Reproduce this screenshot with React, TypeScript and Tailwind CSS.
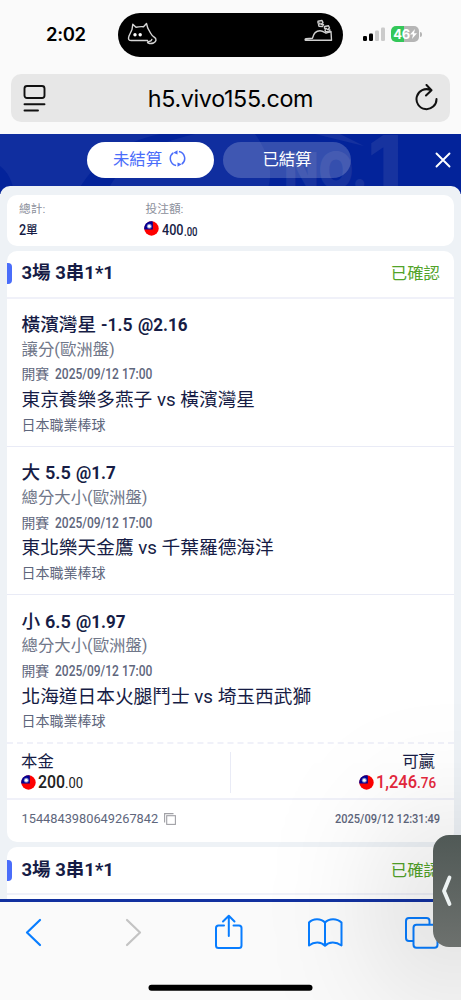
type Leg = {
  pick: string;
  line: string;
  odds: string;
  market: string;
  teams: string;
};

const legs: Leg[] = [
  { pick: "橫濱灣星", line: "-1.5", odds: "@2.16", market: "讓分(歐洲盤)", teams: "東京養樂多燕子 vs 橫濱灣星" },
  { pick: "大", line: "5.5", odds: "@1.7", market: "總分大小(歐洲盤)", teams: "東北樂天金鷹 vs 千葉羅德海洋" },
  { pick: "小", line: "6.5", odds: "@1.97", market: "總分大小(歐洲盤)", teams: "北海道日本火腿鬥士 vs 埼玉西武獅" },
];

function Flag() {
  return (
    <svg className="size-[15px] shrink-0" viewBox="0 0 15 15">
      <circle cx="7.5" cy="7.5" r="7.2" fill="#fe0000" />
      <path d="M.3 8.5A7.2 7.2 0 0 1 8.8.4V8.500Z" fill="#000095" />
      <circle cx="5.3" cy="5.3" r="2.500" fill="#7a82cb" />
      <circle cx="5.3" cy="5.3" r="1.500" fill="#fff" />
    </svg>
  );
}

function StatusBar() {
  return (
    <div className="flex h-[74px] items-start">
      <div className="w-[118px] pt-[20px] pl-[46px] font-['Inter',sans-serif] text-[18.5px] leading-7 font-semibold tracking-[-0.400px] text-black">
        2:02
      </div>
      <div className="mt-[13px] flex h-[43.5px] w-[225px] items-start justify-between rounded-full bg-black pr-[10px] pl-[9px]">
        <svg className="mt-[9px] h-[23px] w-[31px]" viewBox="0 0 31 23" fill="none" stroke="#d6d6d6" strokeWidth="1.400" strokeLinejoin="round" strokeLinecap="round">
          <path d="M20.500 18.500H4C1.300 18.500 1.100 16.500 2 14L5 7.500L5.800 2.300L9 5.300C12 4.600 14.500 4.500 16.500 4.800L19.500 1.500L20.800 6.200L23.500 11C24.500 12.800 25.500 14 27 15C30 16.500 29.500 20 26.500 21C24 22 20.500 21.500 20.500 20.300C21 19 24.500 20 24.800 17.500" />
          <circle cx="8" cy="12.800" r="1.700" fill="#fff" stroke="none" />
          <circle cx="13.200" cy="12.800" r="1.700" fill="#fff" stroke="none" />
        </svg>
        <svg className="mt-[6px] h-[23px] w-[29px]" viewBox="0 0 29 23" fill="none" stroke="#cfcfcf" strokeWidth="1.400" strokeLinejoin="round" strokeLinecap="round">
          <path d="M2 19.800L8.500 19.200C9.500 14.500 12.500 11.800 16 11.800C18.500 11.800 20 13 22 14.200L27 12.500L27.500 21.300H2C.8 21.300.8 20.100 2 19.800Z" />
          <path d="M14 2.200L18 1.500L19 3.500L17 5.200L19.500 5.500L18.500 7.500L15 7.200L14.500 5.800L16 4.200L14 4Z" />
          <path d="M20.500 7.500L24.500 6.800L25.500 9L23.500 10.500L26 11L25 13L21.500 12.500L21 11L22.500 9.500L20.500 9.300Z" />
        </svg>
      </div>
      <div className="mt-[26px] ml-5 flex items-end gap-[3px]">
        <svg className="h-[16px] w-[22px]" viewBox="0 0 22 16">
          <rect x="0" y="10" width="4" height="5" rx="1.2" fill="#000" />
          <rect x="6" y="7.500" width="4" height="7.500" rx="1.2" fill="#000" />
          <rect x="12" y="4.500" width="4" height="10.500" rx="1.2" fill="#cbcbcb" />
          <rect x="18" y="1.500" width="4" height="13.500" rx="1.2" fill="#cbcbcb" />
        </svg>
        <div className="ml-[3px] flex items-center">
          <div className="flex h-4 w-[28px] items-center justify-center rounded-[5px] bg-linear-to-r from-[#34c759] from-46% to-[#b5b5b5] to-46% font-['Inter',sans-serif] text-[13px] leading-4 font-bold text-white">
            <span className="tracking-[-0.4px]">46</span>
            <svg className="h-[10px] w-[7px]" viewBox="0 0 7 10" fill="#fff"><path d="M5 0L0 5.600H3L2 10L7 4.300H4Z" /></svg>
          </div>
          <div className="ml-px h-[5px] w-[1.500px] rounded-r-full bg-[#b5b5b5]" />
        </div>
      </div>
    </div>
  );
}

function AddressBar() {
  return (
    <div className="mx-[11px] flex h-12 items-center justify-between rounded-[10px] bg-[#e7e7e7] pr-[12px] pl-3">
      <svg className="h-7 w-6" viewBox="0 0 24 28" fill="none" stroke="#111" strokeWidth="1.900" strokeLinecap="round">
        <rect x="1.500" y="2" width="20" height="12" rx="2.500" />
        <path d="M1.500 20.300H21.500M1.500 26.500H15" />
      </svg>
      <div className="pt-[2px] font-['Inter',sans-serif] text-[23.300px] tracking-[-0.350px] text-black">h5.vivo155.com</div>
      <svg className="h-7 w-6" viewBox="0 0 24 28" fill="none" stroke="#111" strokeWidth="2" strokeLinecap="round" strokeLinejoin="round">
        <path d="M16.500 6A10 10 0 1 0 22.500 15M12.500 1L17.500 6.200L12 11.500" />
      </svg>
    </div>
  );
}

function Tabs() {
  return (
    <div className="relative flex h-[60px] items-start overflow-hidden bg-[#102e9f] pt-2 pl-[87px]">
      <svg className="absolute inset-0 h-[60px] w-[461px]" viewBox="0 0 461 60">
        <path d="M255 0H461V60H265C275 45 270 20 255 0Z" fill="#03239a" />
        <path d="M76 60C92 30 120 8 160 0H195C150 10 120 28 106 60Z" fill="#03239a" />
        <path d="M0 32C8 38 13 48 14 60H0Z" fill="#03239a" />
        <path d="M315 0L364 12L340 0Z" fill="#15319f" />
        <text x="284" y="54" fill="#17339f" fontSize="50" fontWeight="900" fontFamily="Inter, sans-serif" textLength="84" lengthAdjust="spacingAndGlyphs">NO.</text>
        <text x="368" y="55" fill="#17339f" fontSize="74" fontWeight="900" fontFamily="Inter, sans-serif">1</text>
      </svg>
      <div className="relative flex h-[35.500px] w-[127px] items-center justify-center gap-[7px] rounded-full bg-white pt-px pr-[2px] text-[16.400px] text-[#4a6dfa]">
        <span>未結算</span>
        <svg className="-mt-[3px] h-[17px] w-[17px]" viewBox="0 0 18 18" fill="none" stroke="#4a6dfa" strokeWidth="1.600">
          <path d="M7.500 16.300A7.400 7.400 0 0 1 4.500 3M10.500 1.700A7.400 7.400 0 0 1 13.500 15" />
          <path d="M4.500 2.800L9 .3V4.800ZM13.500 15.200L9 17.700V13.200Z" fill="#4a6dfa" stroke="none" />
        </svg>
      </div>
      <div className="relative ml-[9px] flex h-[35.500px] w-[128px] items-center justify-center rounded-full bg-white/20 pt-px text-[16.400px] text-white">
        已結算
      </div>
      <svg className="relative mt-[10px] ml-[84px] size-4" viewBox="0 0 16 16" stroke="#fff" strokeWidth="1.900" strokeLinecap="round">
        <path d="M1.500 1.500L14.500 14.500M14.500 1.500L1.500 14.500" />
      </svg>
    </div>
  );
}

function SlipHeader() {
  return (
    <div className="flex h-[48px] items-center justify-between border-b-2 border-[#f0f1f9] pr-[14px]">
      <div className="flex items-center">
        <span className="h-[21px] w-[5px] rounded-r-[4px] bg-[#4a6dfa]" />
        <span className="ml-[9.500px] pt-px text-[18.500px] font-bold text-[#161c45]">3場 3串1*1</span>
      </div>
      <span className="pt-[2px] text-[16.400px] text-[#52a329]">已確認</span>
    </div>
  );
}

function LegRow({ leg, last }: { leg: Leg; last: boolean }) {
  return (
    <div className={`pt-[14px] pl-[14.500px] whitespace-nowrap ${last ? "h-[149px] border-b-2 border-dashed border-[#f0f1f9]" : "h-[148.400px] border-b border-[#e9ebf6]"}`}>
      <div className="flex h-[25px] items-center gap-[5px] text-[18.700px] font-medium text-[#161c45]">
        <span>{leg.pick}</span>
        <span className={`inline-block origin-left font-semibold ${leg.line.startsWith("-") ? "-mr-[2px] scale-x-[0.94]" : "-mr-px scale-x-[0.97]"}`}>{leg.line}</span>
        <span className="inline-block origin-left scale-x-[0.91] font-bold">{leg.odds}</span>
      </div>
      <div className="flex h-[25px] items-center text-[16.400px] text-[#707789]">{leg.market}</div>
      <div className="flex h-[24px] items-center gap-[6px] text-[13.800px] text-[#5e667c]">
        <span>開賽</span>
        <span className="inline-block w-[97px] origin-left scale-x-[0.870] font-medium">2025/09/12 17:00</span>
      </div>
      <div className="flex h-[27px] items-center text-[18.700px] text-[#161c45]">{leg.teams}</div>
      <div className="flex h-[23px] items-center text-[14px] text-[#5e667c]">日本職業棒球</div>
    </div>
  );
}

function Slip() {
  return (
    <section className="h-[591.500px] overflow-hidden rounded-[10px] bg-white">
      <SlipHeader />
      {legs.map((leg, i) => (
        <LegRow key={leg.teams} leg={leg} last={i === legs.length - 1} />
      ))}
      <div className="flex h-[55.500px] border-b-2 border-[#f0f1f9] whitespace-nowrap">
        <div className="mt-2 h-[41px] w-[224px] border-r border-[#e9ebf6] pl-[14px]">
          <div className="flex h-5 items-center text-[16.400px] text-[#161c45]">本金</div>
          <div className="flex h-[20px] items-center text-[#222]">
            <Flag />
            <span className="ml-[1.500px] inline-block w-[27.500px] origin-left scale-x-[0.85] text-[18.700px] font-medium">200</span>
            <span className="mt-[3px] inline-block origin-left scale-x-[0.84] text-[15.500px]">.00</span>
          </div>
        </div>
        <div className="mt-2 flex flex-1 flex-col items-end pr-[19px]">
          <div className="flex h-5 items-center text-[16.400px] text-[#161c45]">可贏</div>
          <div className="flex h-[20px] items-center text-[#e5283d]">
            <Flag />
            <span className="ml-[2px] inline-block w-[41px] origin-left scale-x-[0.88] text-[18.700px] font-medium">1,246</span>
            <span className="-mr-px mt-[3px] inline-block w-[19px] origin-left scale-x-[0.87] text-[15.500px] font-medium">.76</span>
          </div>
        </div>
      </div>
      <div className="flex h-[38px] items-center pr-[14px] pl-[14.500px] whitespace-nowrap text-[#5e667c]">
        <span className="text-[12.800px]">1544843980649267842</span>
        <svg className="ml-[6px] size-3" viewBox="0 0 12 12" fill="none" stroke="#a0a0a5" strokeWidth="1.100">
          <rect x="2.700" y="2.700" width="8.700" height="8.700" />
          <path d="M.6 9.500V.6H9.500" />
        </svg>
        <span className="ml-auto inline-block w-[105px] origin-left scale-x-[0.850] text-[13px] font-medium">2025/09/12 12:31:49</span>
      </div>
    </section>
  );
}

function Toolbar() {
  return (
    <div className="h-[101px] border-t-[3px] border-[#1231a0] bg-[#fafafa]">
      <svg className="block h-[98px] w-[461px]" viewBox="0 902 461 98" fill="none" stroke="#087dff" strokeWidth="2" strokeLinecap="round" strokeLinejoin="round">
        <path d="M40 920L27 932.500L40 945" strokeWidth="2.200" />
        <path d="M127 920L140 932.500L127 945" stroke="#c3c3c3" strokeWidth="2.200" />
        <path d="M224 925.500H218.500Q216 925.500 216 928V945.500Q216 948 218.500 948H239Q241.500 948 241.500 945.500V928Q241.500 925.500 239 925.500H233.500M228.800 936V916M223 921.500L228.800 915.700L234.500 921.500" />
        <path d="M325 922.500C321 918 313 918 309 922.500V945.500C314 941.500 321 941.500 325 945.800C329 941.500 336 941.500 341.500 945.500V922.500C337 918 329 918 325 922.500ZM325 922.500V945.500" />
        <rect x="413.500" y="924.800" width="24" height="23" rx="3" />
        <path d="M413 941H409Q406 941 406 938V921Q406 918 409 918H426.500Q429.500 918 429.500 921V924" />
        <path d="M151.500 987.700H309.500" stroke="#000" strokeWidth="6" />
      </svg>
    </div>
  );
}

export default function App() {
  return (
    <main className="relative h-[1000px] w-[461px] overflow-hidden bg-[#fafafa] font-['Roboto','Noto_Sans_CJK_TC',sans-serif]">
      <StatusBar />
      <AddressBar />
      <div className="mt-3 flex h-[765px] flex-col overflow-hidden">
        <Tabs />
        <div className="relative -mt-[8.500px] flex-1 overflow-hidden rounded-t-[10px] bg-[#eef2f6] px-[7px] pt-[9px]">
          <div className="flex h-[51px] rounded-[10px] bg-white pl-[12px] whitespace-nowrap">
            <div className="w-[126.500px] pt-[5px]">
              <div className="flex h-[20px] items-center text-[11.700px] text-[#8b8f9b]">總計:</div>
              <div className="flex h-[22px] items-center text-[#161c45]">
                <span className="inline-block w-[7px] origin-left scale-x-[0.9] text-[14px] font-medium">2</span>
                <span className="text-[11.700px] font-medium">單</span>
              </div>
            </div>
            <div className="pt-[5px]">
              <div className="flex h-[20px] items-center text-[11.700px] text-[#8b8f9b]">投注額:</div>
              <div className="-ml-[2px] flex h-[22px] items-center text-[#161c45]">
                <span className="-mt-[5px]"><Flag /></span>
                <span className="ml-[3px] inline-block w-[22px] origin-left scale-x-[0.87] text-[14.500px] font-medium">400</span>
                <span className="mt-[2px] inline-block origin-left scale-x-[0.8] text-[12px] font-medium">.00</span>
              </div>
            </div>
          </div>
          <div className="mt-[5px] flex flex-col gap-[5px]">
            <Slip />
            <Slip />
          </div>
        </div>
      </div>
      <Toolbar />
      <div className="absolute top-[835px] left-[433px] flex h-[112px] w-[44px] items-center rounded-[16px] bg-linear-to-b from-[#505956] to-[#6d716e] pl-[8px] shadow-[0_15px_140px_20px_rgba(0,0,0,0.26)]">
        <svg className="h-8 w-3" viewBox="0 0 12 32" fill="none" stroke="#edf3f3" strokeWidth="3.800" strokeLinecap="round" strokeLinejoin="round">
          <path d="M8.500 2.500L3 16L8.500 29" />
        </svg>
      </div>
    </main>
  );
}
